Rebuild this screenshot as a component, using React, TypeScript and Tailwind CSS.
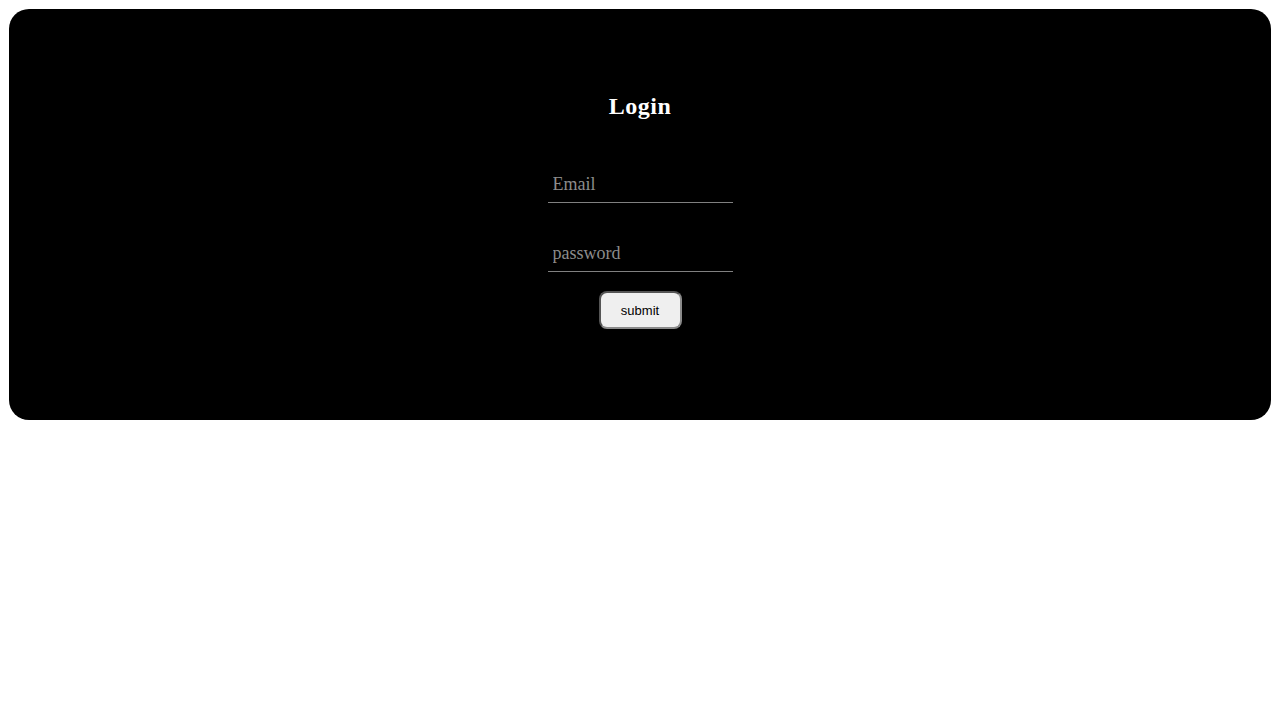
const App = () => {
  return (
    <div className="p-[9px] bg-white min-h-[720px]">
      <div
        className="bg-black rounded-[20px] h-[411px] flex flex-col items-center pt-[83px]"
        style={{ fontFamily: '"Liberation Serif", serif' }}
      >
        <h2 className="text-[24px] leading-[28px] font-bold text-white tracking-[0.5px]">
          Login
        </h2>

        <input
          type="email"
          placeholder="Email"
          className="mt-[48px] w-[185px] h-[35px] bg-transparent border-b border-[#808080] px-[5px] pb-[2px] text-[18px] text-white placeholder:text-[#8c8c8c] outline-none"
        />
        <input
          type="password"
          placeholder="password"
          className="mt-[34px] w-[185px] h-[35px] bg-transparent border-b border-[#808080] px-[5px] pb-[2px] text-[18px] text-white placeholder:text-[#8c8c8c] outline-none"
        />

        <button
          className="mt-[19px] w-[83px] h-[38px] pt-[2px] rounded-[8px] border-2 border-[#555555] border-b-[#8a8a8a] border-r-[#8a8a8a] bg-[#efefef] text-[13px] text-black"
          style={{ fontFamily: '"Liberation Sans", Arial, sans-serif' }}
        >
          submit
        </button>
      </div>
    </div>
  );
};

export default App;
